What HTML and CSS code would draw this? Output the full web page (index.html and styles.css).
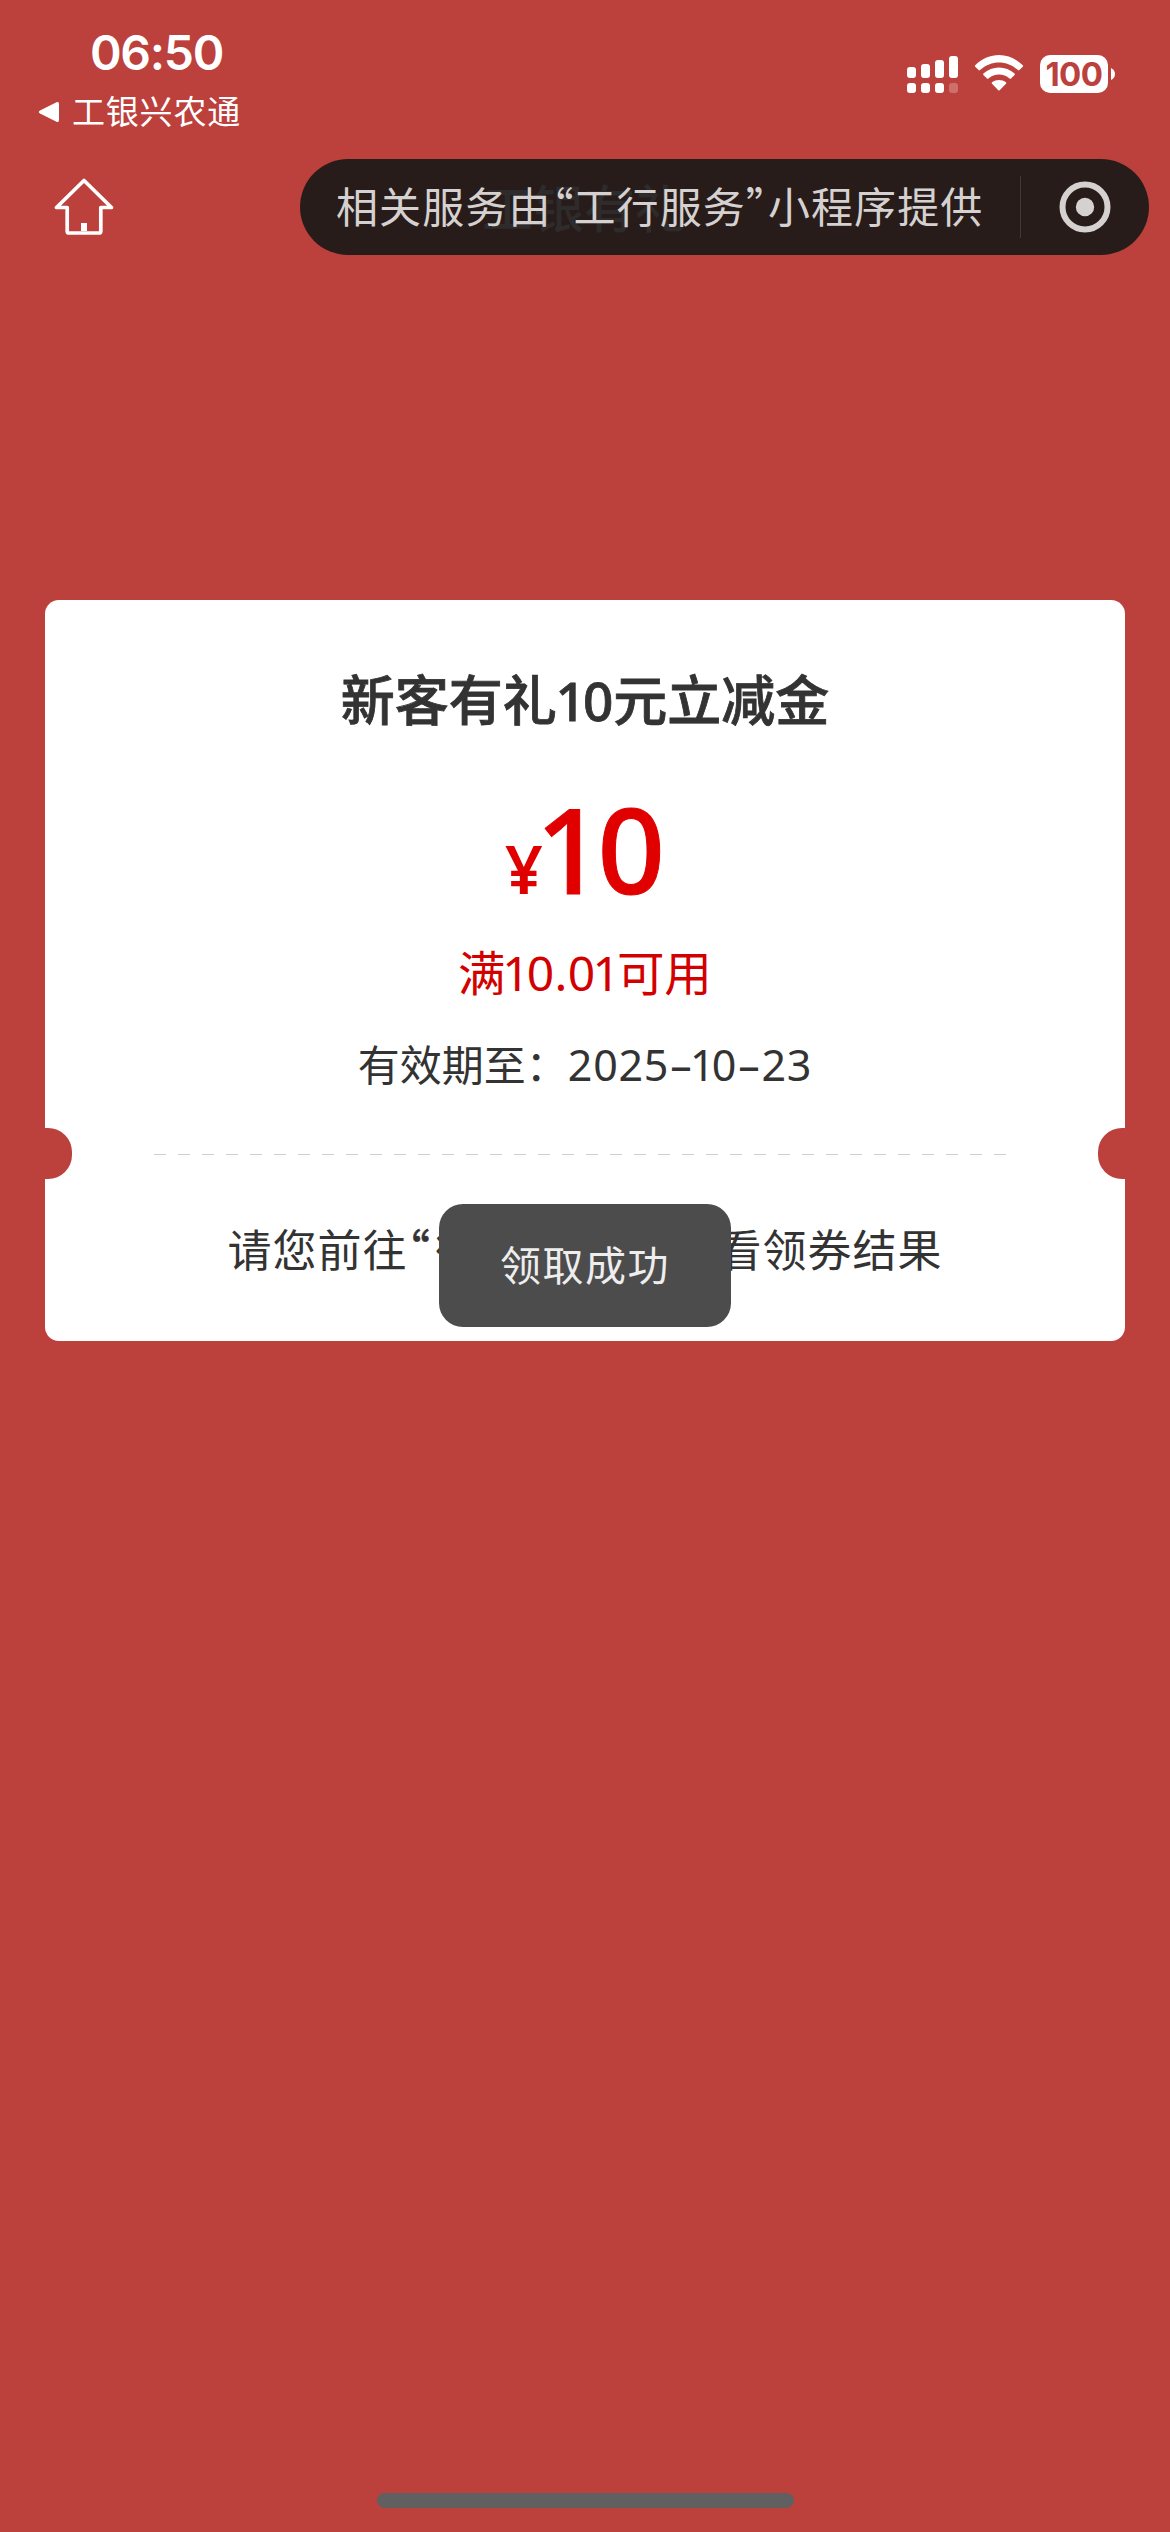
FILE: index.html
```html
<!DOCTYPE html>
<html lang="zh-CN">
<head>
<meta charset="utf-8">
<title>工银有礼</title>
<link rel="stylesheet" href="styles.css">
</head>
<body>
<div class="screen">
  <header class="status">
    <div class="status-left">
      <div class="time">06:50</div>
      <div class="back">
        <svg width="22" height="22" viewBox="0 0 22 22"><path d="M2 9.5 18.5 1.3Q21 .3 21 3V19Q21 21.700 18.500 20.700L2 12.500Q-.5 11 2 9.500Z" fill="#fff"/></svg>
        <span class="back-label">工银兴农通</span>
      </div>
    </div>
    <div class="status-icons">
      <svg class="signal" width="52" height="38" viewBox="0 0 52 38" fill="#fff">
        <rect x="0" y="12" width="9" height="11" rx="3"/><rect x="14" y="9" width="9" height="14" rx="3"/><rect x="28" y="5" width="9" height="18" rx="3"/><rect x="42" y="1" width="9" height="22" rx="3"/>
        <rect x="0" y="28" width="9" height="10" rx="3"/><rect x="14" y="28" width="9" height="10" rx="3"/><rect x="28" y="28" width="9" height="10" rx="3"/><rect x="42" y="28" width="9" height="10" rx="3" opacity=".25"/>
      </svg>
      <svg class="wifi" width="50" height="38" viewBox="0 0 50 38" fill="#fff">
        <path d="M1.200 10.300C15-3.300 35-3.300 48.800 10.300Q49.500 11 48.800 11.700L45.400 15.100Q44.700 15.800 44 15.100C33 4.800 17 4.800 6 15.100Q5.300 15.800 4.600 15.100L1.200 11.700Q.5 11 1.200 10.300Z"/>
        <path d="M9.400 18.600C18 10.600 32 10.600 40.600 18.600Q41.300 19.300 40.600 20L37 23.600Q36.300 24.300 35.600 23.600C29.500 18.200 20.500 18.200 14.400 23.600Q13.700 24.300 13 23.600L9.400 20Q8.700 19.300 9.400 18.600Z"/>
        <path d="M18 27.200C22 24.200 28 24.200 32 27.200Q32.800 28 32 28.800L25.700 35.200Q25 35.900 24.300 35.200L18 28.800Q17.200 28 18 27.200Z"/>
      </svg>
      <div class="battery"><span class="level">100</span><svg width="4" height="12" viewBox="0 0 4 12"><path d="M0 0Q4 2 4 6T0 12Z" fill="#fff"/></svg></div>
    </div>
  </header>

  <nav class="navbar">
    <svg width="60" height="58" viewBox="0 0 60 58" fill="none" stroke="#fff" stroke-width="3.700" stroke-linejoin="round" stroke-linecap="round">
      <path d="M30 2.500 2.500 29.500H13.200V53.200Q13.200 55 15 55H45Q46.800 55 46.800 53.200V29.500H57.500Z"/>
      <path d="M30 45V53" stroke-width="6" stroke-linecap="butt"/>
    </svg>
    <div class="capsule">
      <div class="page-name">工银有礼</div>
      <div class="notice">相关服务由<span class="quote">“</span>工行服务<span class="quote">”</span>小程序提供</div>
      <div class="divider"></div>
      <svg class="target" width="52" height="52" viewBox="0 0 52 52"><circle cx="26" cy="26" r="22.500" fill="none" stroke="#d5d1d0" stroke-width="6"/><circle cx="26" cy="26" r="9.200" fill="#d5d1d0"/></svg>
    </div>
  </nav>

  <main class="coupon">
    <h1 class="title">新客有礼<span class="num"><span class="one">1</span>0</span>元立减金</h1>
    <div class="price"><span class="yen">¥</span><span class="amount"><span class="one">1</span>0</span></div>
    <div class="condition">满<span class="num"><span class="one">1</span>0.0<span class="one">1</span></span>可用</div>
    <div class="expiry">有效期至：<span class="num">2025<span class="dash">–</span><span class="one">1</span>0<span class="dash">–</span>23</span></div>
    <div class="tear"><i class="notch"></i><svg class="dashes" width="852" height="2"><path d="M0 1.500H852" stroke="#d0d0d0" stroke-dasharray="12 12"/></svg><i class="notch right"></i></div>
    <div class="hint">请您前往<span class="quote">“</span>微信服务号<span class="quote close">”</span>查看领券结果</div>
    <div class="toast">领取成功</div>
  </main>
  <div class="home-indicator"></div>
</div>
</body>
</html>
```
FILE: styles.css
```css
* { box-sizing: border-box; }
body { margin: 0; background: #bc403c; }
.screen {
  width: 1170px; height: 2532px; background: #bc403c; color: #333;
  display: flex; flex-direction: column; overflow: hidden;
  font-family: "Noto Sans CJK SC", sans-serif;
}
.screen svg { display: block; flex: none; }
.status { height: 159px; display: flex; justify-content: space-between; padding: 0 55px 0 38px; color: #fff; }
.status-left { padding-top: 23px; }
.time { font: 600 48px/60px Inter, sans-serif; margin-left: 52px; letter-spacing: -1.300px; }
.back { display: flex; align-items: center; gap: 12px; height: 58px; }
.back-label { font-size: 33px; letter-spacing: .8px; line-height: 54px; padding-bottom: 4px; }
.status-icons { display: flex; align-items: flex-start; padding-top: 55px; }
.wifi { margin-left: 15px; }
.battery { display: flex; align-items: center; gap: 3px; margin-left: 16px; height: 38px; }
.level { width: 68px; height: 38px; border-radius: 10px; background: #fff; color: #bc403c; text-align: center; font: 700 33px/38px Inter, sans-serif; letter-spacing: -.5px; }

.navbar { height: 96px; display: flex; align-items: center; justify-content: space-between; padding: 0 21px 0 54px; }
.capsule { position: relative; width: 849px; height: 96px; border-radius: 48px; background: #281c1a; display: flex; align-items: center; padding-left: 36px; color: #d5d1d0; }
.page-name { position: absolute; left: 182px; top: 11px; font-size: 51px; line-height: 72px; font-weight: 500; color: #2d2b2b; }
.notice { position: relative; width: 684px; height: 96px; font-size: 42px; line-height: 92px; letter-spacing: 1.100px; white-space: nowrap; }
.quote { display: inline-block; width: 22px; font-feature-settings: "palt"; text-align: center; letter-spacing: 0; line-height: 1; }
.divider { width: 1px; height: 62px; background: #423836; }
.target { margin-left: 38px; }

.coupon { position: relative; width: 1080px; height: 741px; margin: 345px auto 0; padding-top: 63px; border-radius: 14px; background: #fff; display: flex; flex-direction: column; align-items: center; white-space: nowrap; }
.num { font-family: "Noto Sans", sans-serif; }
.one { margin: 0 -.084em; }
.title { height: 70px; margin: 0; font-size: 54px; font-weight: 500; line-height: 70px; -webkit-text-stroke: .8px #333; }
.title .num { font-size: 53px; letter-spacing: 0; }
.title .one { margin: 0 -.055em 0 -.02em; }
.price { height: 184px; display: flex; align-items: baseline; color: #e10000; font-family: "Noto Sans", sans-serif; font-weight: 600; line-height: 232px; }
.yen { font-size: 66px; }
.amount { font-size: 118px; font-weight: 500; -webkit-text-stroke: 1px #e10000; }
.amount .one { margin: 0 -.05em 0 -.06em; }
.condition { height: 106px; line-height: 108px; font-size: 47.500px; color: #d30000; }
.condition .num { font-size: 48px; letter-spacing: .4px; }
.condition .one { margin: 0 -.07em; }
.expiry { height: 78px; line-height: 79px; font-size: 42px; }
.expiry .num { font-size: 43px; letter-spacing: .7px; }
.dash { padding: 0 1.200px; }
.tear { width: 1080px; height: 51px; margin-top: 27px; display: flex; align-items: center; justify-content: space-between; }
.dashes { margin-right: 11px; }
.notch { width: 27px; height: 51px; background: #bc403c; border-radius: 0 24px 24px 0; }
.notch.right { border-radius: 24px 0 0 24px; }
.hint { height: 90px; margin-top: 24px; line-height: 90px; font-size: 44px; letter-spacing: 1px; }
.hint .quote { width: 28px; padding-right: 6px; -webkit-text-stroke: .6px #333; }
.hint .quote.close { width: 12px; padding-right: 0; }
.toast { position: absolute; left: 394px; top: 604px; width: 292px; height: 123px; border-radius: 24px; background: #4c4c4c; color: #eee; text-align: center; font-size: 41px; line-height: 119px; letter-spacing: 1.500px; }
.home-indicator { width: 417px; height: 15px; margin: auto auto 24px; border-radius: 8px; background: #606060; }
```
